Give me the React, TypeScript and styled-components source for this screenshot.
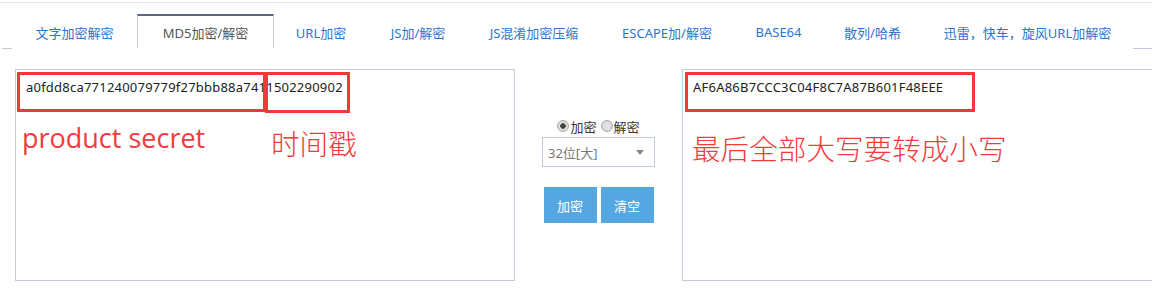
import React, { useState } from 'react';
import styled, { createGlobalStyle } from 'styled-components';

const GlobalStyle = createGlobalStyle`
  html, body {
    margin: 0;
    padding: 0;
    background: #fff;
    overflow: hidden;
  }
  body {
    font-family: 'Noto Sans', 'Noto Sans CJK SC', sans-serif;
    font-size: 13px;
    color: #333;
  }
`;

const Page = styled.div`
  width: 1152px;
  height: 294px;
  padding-top: 2px;
  box-sizing: border-box;
`;

const TopRule = styled.div`
  border-top: 1px solid #e4e6ea;
`;

const TabBar = styled.div`
  display: flex;
  align-items: flex-end;
  height: 45px;
  margin-left: 2px;
  padding-left: 10px;
  border-bottom: 1px solid #c4cbdb;
`;

const Tab = styled.div<{ $active?: boolean; $w: number }>`
  width: ${p => p.$w}px;
  height: 35px;
  box-sizing: border-box;
  display: flex;
  align-items: center;
  justify-content: center;
  margin-bottom: -1px;
  border: 1px solid ${p => (p.$active ? '#c4cbdb' : 'transparent')};
  border-top: 2px solid ${p => (p.$active ? '#5a6884' : 'transparent')};
  border-bottom: 1px solid ${p => (p.$active ? '#fff' : 'transparent')};
  background: #fff;
  color: ${p => (p.$active ? '#555' : '#2a76cf')};
  white-space: nowrap;
  cursor: pointer;
`;

const Main = styled.div`
  display: flex;
  padding: 20px 0 0 15px;
`;

const TextBox = styled.div<{ $w: number }>`
  position: relative;
  flex: none;
  width: ${p => p.$w}px;
  height: 212px;
  box-sizing: border-box;
  border: 1px solid #c4cbdb;
  padding: 7px 10px;
  line-height: 20px;
  letter-spacing: 0.22px;
  color: #222;
  white-space: nowrap;
`;

const Mark = styled.div<{ $l: number; $t: number; $w: number; $h: number }>`
  position: absolute;
  left: ${p => p.$l}px;
  top: ${p => p.$t}px;
  width: ${p => p.$w}px;
  height: ${p => p.$h}px;
  box-sizing: border-box;
  border: 3px solid #f03a3a;
`;

const Note = styled.div<{ $l: number; $t: number; $latin?: boolean }>`
  position: absolute;
  left: ${p => p.$l}px;
  top: ${p => p.$t}px;
  color: #f23b3b;
  font-size: ${p => (p.$latin ? '27px' : '28.6px')};
  line-height: 1;
  letter-spacing: 0;
  font-family: ${p =>
    p.$latin ? "'Open Sans', 'Noto Sans', sans-serif" : "'Noto Sans CJK SC', sans-serif"};
  font-weight: ${p => (p.$latin ? 400 : 300)};
  white-space: nowrap;
`;

const Controls = styled.div`
  flex: none;
  width: 167px;
  display: flex;
  flex-direction: column;
  align-items: center;
  padding-top: 49px;
`;

const RadioRow = styled.div`
  display: flex;
  align-items: center;
  height: 16px;
  gap: 4px;
`;

const RadioLabel = styled.label`
  display: flex;
  align-items: center;
  gap: 1px;
  color: #333;
  cursor: pointer;
`;

const RadioDot = styled.span<{ $on: boolean }>`
  width: 12px;
  height: 12px;
  box-sizing: border-box;
  border-radius: 50%;
  border: 1px solid #a8a8a8;
  background: radial-gradient(circle, ${p => (p.$on ? '#444 0 2.5px' : '#e4e4e4 0 2px')}, #dcdcdc 3px);
`;

const Select = styled.div`
  margin-top: 3px;
  width: 113px;
  height: 30px;
  box-sizing: border-box;
  border: 1px solid #c4cbdb;
  display: flex;
  align-items: center;
  justify-content: space-between;
  padding: 0 10px 0 5px;
  color: #777;
`;

const Caret = styled.span`
  width: 0;
  height: 0;
  border-left: 4px solid transparent;
  border-right: 4px solid transparent;
  border-top: 5px solid #888;
`;

const ButtonRow = styled.div`
  display: flex;
  gap: 4px;
  margin-top: 20px;
`;

const Button = styled.button`
  width: 53px;
  height: 36px;
  border: none;
  background: #55a7e2;
  color: #fff;
  font-family: inherit;
  font-size: 13px;
  padding: 0;
  cursor: pointer;
`;

const tabs = [
  { label: '文字加密解密', w: 125 },
  { label: 'MD5加密/解密', w: 137 },
  { label: 'URL加密', w: 94 },
  { label: 'JS加/解密', w: 100 },
  { label: 'JS混淆加密压缩', w: 132 },
  { label: 'ESCAPE加/解密', w: 134 },
  { label: 'BASE64', w: 89 },
  { label: '散列/哈希', w: 99 },
  { label: '迅雷，快车，旋风URL加解密', w: 211 },
];

export default function App() {
  const [active, setActive] = useState(1);
  const [encrypt, setEncrypt] = useState(true);

  return (
    <Page>
      <GlobalStyle />
      <TopRule />
      <TabBar>
        {tabs.map((t, i) => (
          <Tab key={t.label} $w={t.w} $active={i === active} onClick={() => setActive(i)}>
            {t.label}
          </Tab>
        ))}
      </TabBar>
      <Main>
        <TextBox $w={500}>
          a0fdd8ca771240079779f27bbb88a7411502290902
          <Mark $l={1} $t={2} $w={249} $h={40} />
          <Mark $l={249} $t={2} $w={85} $h={41} />
          <Note $latin $l={6} $t={54}>product secret</Note>
          <Note $l={255} $t={59}>时间戳</Note>
        </TextBox>
        <Controls>
          <RadioRow>
            <RadioLabel onClick={() => setEncrypt(true)}>
              <RadioDot $on={encrypt} />加密
            </RadioLabel>
            <RadioLabel onClick={() => setEncrypt(false)}>
              <RadioDot $on={!encrypt} />解密
            </RadioLabel>
          </RadioRow>
          <Select>
            32位[大]
            <Caret />
          </Select>
          <ButtonRow>
            <Button>加密</Button>
            <Button>清空</Button>
          </ButtonRow>
        </Controls>
        <TextBox $w={520}>
          AF6A86B7CCC3C04F8C7A87B601F48EEE
          <Mark $l={2} $t={2} $w={290} $h={40} />
          <Note $l={9} $t={64}>最后全部大写要转成小写</Note>
        </TextBox>
      </Main>
    </Page>
  );
}
